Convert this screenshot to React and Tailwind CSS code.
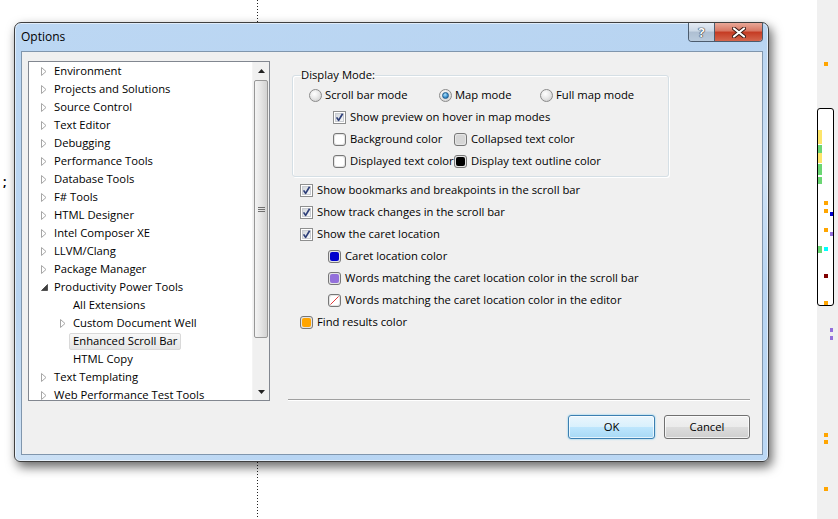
import React from "react";

const FONT = "font-['Open_Sans',sans-serif]";

function TriCollapsed() {
  return (
    <svg width="6" height="9" viewBox="0 0 6 9" className="block">
      <path d="M0.5 0.5 L5 4.5 L0.5 8.5 Z" fill="#ffffff" stroke="#a6a6a6" strokeWidth="1" />
    </svg>
  );
}

function TriExpanded() {
  return (
    <svg width="7" height="7" viewBox="0 0 7 7" className="block">
      <path d="M6.5 0.5 L6.5 6.5 L0.5 6.5 Z" fill="#404040" stroke="#404040" strokeWidth="0.8" strokeLinejoin="round" />
    </svg>
  );
}

const treeItems = [
  { t: "Environment", l: 0, e: "c" },
  { t: "Projects and Solutions", l: 0, e: "c" },
  { t: "Source Control", l: 0, e: "c" },
  { t: "Text Editor", l: 0, e: "c" },
  { t: "Debugging", l: 0, e: "c" },
  { t: "Performance Tools", l: 0, e: "c" },
  { t: "Database Tools", l: 0, e: "c" },
  { t: "F# Tools", l: 0, e: "c" },
  { t: "HTML Designer", l: 0, e: "c" },
  { t: "Intel Composer XE", l: 0, e: "c" },
  { t: "LLVM/Clang", l: 0, e: "c" },
  { t: "Package Manager", l: 0, e: "c" },
  { t: "Productivity Power Tools", l: 0, e: "e" },
  { t: "All Extensions", l: 1, e: null },
  { t: "Custom Document Well", l: 1, e: "c" },
  { t: "Enhanced Scroll Bar", l: 1, e: null, sel: true },
  { t: "HTML Copy", l: 1, e: null },
  { t: "Text Templating", l: 0, e: "c" },
  { t: "Web Performance Test Tools", l: 0, e: "c" },
];

function CheckBox({ checked }) {
  return (
    <span className="relative w-[13px] h-[13px] shrink-0 border border-[#8e8f8f] bg-white p-[1px] flex">
      <span className="flex-1 border border-[#c9ccd1] bg-[linear-gradient(135deg,#d3d7dc,#f6f7f8)]" />
      {checked && (
        <svg className="absolute left-0 top-0" width="11" height="11" viewBox="0 0 11 11">
          <path d="M2.6 5.4 L4.6 8.4 L8.6 1.8" fill="none" stroke="#2e3f79" strokeWidth="1.7" strokeLinejoin="round" />
        </svg>
      )}
    </span>
  );
}

function Radio({ checked }) {
  return (
    <span className="w-[13px] h-[13px] shrink-0 rounded-full border border-[#8b8b8b] bg-[radial-gradient(circle_at_40%_35%,#ffffff,#e9e9e9_45%,#c6c6c6)] flex items-center justify-center">
      {checked && (
        <span className="w-[7px] h-[7px] rounded-full border border-[#205c8c] bg-[radial-gradient(circle_at_40%_35%,#b4e3fa,#3d93d2_55%,#1b5b96)]" />
      )}
    </span>
  );
}

function Swatch({ fill, slash }) {
  return (
    <span className="relative w-[13px] h-[13px] shrink-0 rounded-[3px] border border-[#777777] bg-[#e4e4e4] p-[1px] flex">
      <span className={"flex-1 rounded-[2px] " + fill} />
      {slash && (
        <svg className="absolute left-0 top-0" width="11" height="11" viewBox="0 0 11 11">
          <line x1="1.5" y1="9.5" x2="9.5" y2="1.5" stroke="#e23a3a" strokeWidth="1" />
        </svg>
      )}
    </span>
  );
}

function TreeView() {
  return (
    <div className="ml-[6px] mt-[9px] w-[242px] h-[340px] border border-[#828790] bg-white flex shrink-0">
      <div className="flex-1 overflow-hidden">
        {treeItems.map((it, i) => (
          <div key={i} className={"h-[18px] flex items-center " + (it.l ? "pl-[28px]" : "pl-[9px]")}>
            <span className="w-[16px] h-[18px] flex items-center pl-[3px] shrink-0">
              {it.e === "c" && <TriCollapsed />}
              {it.e === "e" && <TriExpanded />}
            </span>
            <span
              className={
                "-ml-[4px] px-[3px] h-[17px] flex items-center border rounded-[2px] whitespace-nowrap text-black " +
                (it.sel
                  ? "border-[#d9d9d9] bg-[linear-gradient(to_bottom,#f8f8f8,#e5e5e5)]"
                  : "border-transparent")
              }
            >
              {it.t}
            </span>
          </div>
        ))}
      </div>
      <div className="w-[17px] flex flex-col bg-[#f0f0f0] border-l border-[#f4f4f4]">
        <div className="h-[17px] flex items-center justify-center">
          <svg width="7" height="4" viewBox="0 0 7 4" className="block">
            <path d="M0 4 L3.5 0 L7 4 Z" fill="#222" />
          </svg>
        </div>
        <div className="flex-1 px-px pt-[1px]">
          <div className="h-[258px] rounded-[2px] border border-[#979797] bg-[linear-gradient(to_right,#f4f4f4,#e6e6e6_45%,#d2d2d2)] flex items-center justify-center">
            <div className="flex flex-col gap-[1px]">
              <span className="block w-[7px] h-px bg-[#6f6f6f]" />
              <span className="block w-[7px] h-px bg-[#6f6f6f]" />
              <span className="block w-[7px] h-px bg-[#6f6f6f]" />
            </div>
          </div>
        </div>
        <div className="h-[17px] flex items-center justify-center">
          <svg width="7" height="4" viewBox="0 0 7 4" className="block">
            <path d="M0 0 L3.5 4 L7 0 Z" fill="#222" />
          </svg>
        </div>
      </div>
    </div>
  );
}

function Row({ children, className = "" }) {
  return <div className={"h-[22px] flex items-center " + className}>{children}</div>;
}

function RightPanel() {
  return (
    <div className="flex-1 mr-[12px] ml-[18px] flex flex-col pt-[15px]">
      <fieldset className="ml-[4px] w-[377px] border border-[#d5dfe5] rounded-[3px] shadow-[inset_1px_1px_0_#ffffff,1px_1px_0_#ffffff] pl-[8px] pb-[4px]">
        <legend className="h-[16px] leading-[16px] px-0 text-black">Display Mode:</legend>
        <div className="ml-[8px] pt-[1px]">
          <Row>
            <span className="w-[130px] flex items-center gap-[3px]">
              <Radio />
              <span>Scroll bar mode</span>
            </span>
            <span className="w-[101px] flex items-center gap-[3px]">
              <Radio checked />
              <span>Map mode</span>
            </span>
            <span className="flex items-center gap-[3px]">
              <Radio />
              <span>Full map mode</span>
            </span>
          </Row>
          <div className="ml-[24px]">
            <Row className="gap-[4px]">
              <CheckBox checked />
              <span>Show preview on hover in map modes</span>
            </Row>
            <Row>
              <span className="w-[121px] flex items-center gap-[4px]">
                <Swatch fill="bg-white" />
                <span>Background color</span>
              </span>
              <span className="flex items-center gap-[4px]">
                <Swatch fill="bg-[#d6d6d6]" />
                <span>Collapsed text color</span>
              </span>
            </Row>
            <Row>
              <span className="w-[121px] flex items-center gap-[4px]">
                <Swatch fill="bg-white" />
                <span className="whitespace-nowrap">Displayed text color</span>
              </span>
              <span className="flex items-center gap-[4px]">
                <Swatch fill="bg-black" />
                <span>Display text outline color</span>
              </span>
            </Row>
          </div>
        </div>
      </fieldset>

      <div className="mt-[2px] ml-[12px]">
        <Row className="gap-[4px]">
          <CheckBox checked />
          <span>Show bookmarks and breakpoints in the scroll bar</span>
        </Row>
        <Row className="gap-[4px]">
          <CheckBox checked />
          <span>Show track changes in the scroll bar</span>
        </Row>
        <Row className="gap-[4px]">
          <CheckBox checked />
          <span>Show the caret location</span>
        </Row>
        <Row className="gap-[4px] pl-[28px]">
          <Swatch fill="bg-[#0000cd]" />
          <span>Caret location color</span>
        </Row>
        <Row className="gap-[4px] pl-[28px]">
          <Swatch fill="bg-[#9370db]" />
          <span>Words matching the caret location color in the scroll bar</span>
        </Row>
        <Row className="gap-[4px] pl-[28px]">
          <Swatch fill="bg-white" slash />
          <span>Words matching the caret location color in the editor</span>
        </Row>
        <Row className="gap-[4px]">
          <Swatch fill="bg-[#ffa500]" />
          <span>Find results color</span>
        </Row>
      </div>

      <div className="flex-1" />
      <div className="h-[2px] border-t border-[#a0a0a0] border-b border-b-white" />
      <div className="mt-[14px] mb-[15px] flex justify-end gap-[9px]">
        <button className="w-[87px] h-[24px] rounded-[3px] border border-[#3c7fb1] bg-[linear-gradient(to_bottom,#eaf6fd_0%,#d9f0fc_50%,#bee6fd_50%,#a7d9f5_100%)] shadow-[inset_0_0_0_1px_rgba(255,255,255,0.7),0_0_2px_#62c4f0] flex items-center justify-center text-black">
          OK
        </button>
        <button className="w-[86px] h-[24px] rounded-[3px] border border-[#707070] bg-[linear-gradient(to_bottom,#f2f2f2_0%,#ebebeb_50%,#dddddd_50%,#cfcfcf_100%)] shadow-[inset_0_0_0_1px_rgba(255,255,255,0.7)] flex items-center justify-center text-black">
          Cancel
        </button>
      </div>
    </div>
  );
}

function Dialog() {
  return (
    <div className="relative z-10 w-[755px] h-[440px] rounded-t-[7px] rounded-b-[6px] border border-[#3f3f3f] bg-[linear-gradient(160deg,#bcd7f3_0%,#b8d4f1_40%,#cfe2f5_60%,#b8d5f3_75%,#bcd8f4_100%)] shadow-[inset_0_0_0_1px_rgba(255,255,255,0.55),3px_5px_11px_rgba(0,0,0,0.6)] flex flex-col">
      <div className="h-[28px] flex items-start justify-between shrink-0">
        <span className="pl-[6px] pt-[6px] leading-[16px] text-[12px] text-black">Options</span>
        <div className="mr-[5px] flex h-[19px] border border-t-0 border-[#4c5c6e] rounded-b-[4px] overflow-hidden">
          <div className="w-[26px] h-full bg-[linear-gradient(to_bottom,#e4ebf3_0%,#cbd8e6_45%,#aebfd2_50%,#b9cbdd_100%)] border-r border-[#4c5c6e] flex items-center justify-center">
            <span className="text-[13px] leading-[13px] font-bold text-white [text-shadow:0_0_1px_#1e2a38,0_0_1px_#1e2a38,0_0_1px_#1e2a38]">?</span>
          </div>
          <div className="w-[47px] h-full bg-[linear-gradient(to_bottom,#e9a898_0%,#d77662_45%,#c53a22_50%,#d4664d_100%)] flex items-center justify-center">
            <svg width="14" height="11" viewBox="0 0 14 11" className="block">
              <path d="M2 1.5 L12 9.5 M12 1.5 L2 9.5" stroke="#3a1a14" strokeWidth="4" strokeLinecap="round" />
              <path d="M2 1.5 L12 9.5 M12 1.5 L2 9.5" stroke="#ffffff" strokeWidth="2.2" strokeLinecap="round" />
            </svg>
          </div>
        </div>
      </div>
      <div className="ml-[6px] mr-[5px] mb-[6px] flex-1 border border-[#8096ad] bg-[#f0f0f0] flex">
        <TreeView />
        <RightPanel />
      </div>
    </div>
  );
}

const marks = [
  "left-[1px] top-[130px] w-[4px] h-[14px] bg-[#fde56b]",
  "left-[1px] top-[145px] w-[4px] h-[8px] bg-[#6bd673]",
  "left-[1px] top-[153px] w-[4px] h-[10px] bg-[#fde56b]",
  "left-[1px] top-[164px] w-[4px] h-[11px] bg-[#6bd673]",
  "left-[1px] top-[177px] w-[4px] h-[7px] bg-[#6bd673]",
  "left-[1px] top-[246px] w-[4px] h-[7px] bg-[#6bd673]",
  "left-[7px] top-[62px] w-[4px] h-[4px] bg-[#ffa500]",
  "left-[7px] top-[201px] w-[4px] h-[4px] bg-[#ffa500]",
  "left-[7px] top-[209px] w-[4px] h-[4px] bg-[#ffa500]",
  "left-[7px] top-[228px] w-[4px] h-[4px] bg-[#ffa500]",
  "left-[7px] top-[247px] w-[4px] h-[4px] bg-[#00ffff]",
  "left-[7px] top-[274px] w-[4px] h-[4px] bg-[#800000]",
  "left-[7px] top-[301px] w-[4px] h-[4px] bg-[#ffa500]",
  "left-[13px] top-[212px] w-[3px] h-[4px] bg-[#0000cd]",
  "left-[13px] top-[232px] w-[3px] h-[4px] bg-[#9370db]",
  "left-[13px] top-[328px] w-[3px] h-[4px] bg-[#9370db]",
  "left-[13px] top-[336px] w-[3px] h-[4px] bg-[#9370db]",
  "left-[7px] top-[433px] w-[4px] h-[4px] bg-[#ffa500]",
  "left-[7px] top-[440px] w-[4px] h-[4px] bg-[#ffa500]",
  "left-[7px] top-[487px] w-[4px] h-[4px] bg-[#ffa500]",
];

export default function App() {
  return (
    <div className={"w-[838px] h-[519px] bg-white flex overflow-hidden text-[11.25px] leading-[16px] text-black " + FONT}>
      <div className="relative flex-1 pl-[14px] pt-[22px]">
        <div className="absolute left-[257px] top-0 w-px h-full bg-[repeating-linear-gradient(to_bottom,#222_0px,#222_1px,transparent_1px,transparent_3px)]" />
        <span className="absolute left-[3px] top-[174px] text-[12px] font-bold">;</span>
        <Dialog />
      </div>
      <div className="relative w-[21px] bg-[#f0f0f0]">
        <div className="absolute left-0 top-[108px] w-[17px] h-[198px] rounded-[3px] border border-black bg-white" />
        {marks.map((m, i) => (
          <span key={i} className={"absolute " + m} />
        ))}
      </div>
    </div>
  );
}
